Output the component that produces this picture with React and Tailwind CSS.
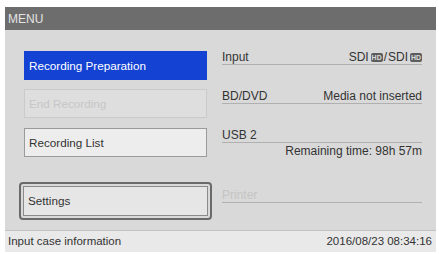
import React from 'react'

const font = { fontFamily: '"Liberation Sans", Arial, sans-serif' }

function HdBadge() {
    return (
        <span className="inline-flex items-center justify-center h-[9px] w-[12px] ml-[2px] rounded-[2px] bg-[#5c5c5c] text-[7px] leading-none font-bold text-[#dcdcdc]">
            HD
        </span>
    )
}

function InfoRow({ label, value, disabled, className }) {
    return (
        <div
            className={`flex items-end justify-between h-[18px] pb-[1px] border-b border-[#b0b0b0] text-[12px] leading-none ${
                disabled ? 'text-[#c4c4c4]' : 'text-[#333]'
            } ${className || ''}`}
        >
            <span>{label}</span>
            {value && <span className="flex items-center">{value}</span>}
        </div>
    )
}

export default function App() {
    return (
        <div className="w-[439px] h-[254px] bg-white pt-[7px] pl-[5px]" style={font}>
            <div className="w-[431px] h-[245px] flex flex-col">
                <div className="h-[23px] bg-[#6d6d6d] flex items-center pl-[3px] text-[12px] text-[#e4e4e4]">
                    MENU
                </div>
                <div className="flex-1 bg-[#d9d9d9] flex">
                    <div className="w-[217px] pl-[19px] flex flex-col">
                        <div className="mt-[21px] w-[183px] h-[29px] bg-[#1443d4] flex items-center pl-[5px] text-[11.7px] text-white">
                            Recording Preparation
                        </div>
                        <div className="mt-[9px] w-[183px] h-[29px] bg-[#dedede] border border-[#cacaca] flex items-center pl-[4px] text-[11.7px] text-[#c6c6c6]">
                            End Recording
                        </div>
                        <div className="mt-[10px] w-[183px] h-[29px] bg-[#ededed] border border-[#9a9a9a] flex items-center pl-[4px] text-[11.7px] text-[#333]">
                            Recording List
                        </div>
                        <div className="mt-[25px] -ml-[5px] w-[193px] h-[38px] rounded-[4px] border-2 border-[#6a6a6a] p-[2px]">
                            <div className="h-full bg-[#e6e6e6] border border-[#8a8a8a] flex items-center pl-[4px] text-[11.7px] text-[#333]">
                                Settings
                            </div>
                        </div>
                    </div>
                    <div className="w-[200px] flex flex-col">
                        <InfoRow
                            className="mt-[17px]"
                            label="Input"
                            value={
                                <>
                                    SDI
                                    <HdBadge />
                                    <span className="mx-[1px]">/</span>SDI
                                    <HdBadge />
                                </>
                            }
                        />
                        <InfoRow className="mt-[21px]" label="BD/DVD" value="Media not inserted" />
                        <InfoRow className="mt-[21px]" label="USB 2" />
                        <div className="text-right text-[12px] leading-none text-[#333] mt-[2px]">
                            Remaining time: 98h 57m
                        </div>
                        <InfoRow className="mt-[28px]" label="Printer" disabled />
                    </div>
                </div>
                <div className="h-[22px] bg-[#e9e9e9] border-t border-[#c2c2c2] flex items-center justify-between pl-[3px] pr-[4px] text-[11.5px] text-[#333]">
                    <span>Input case information</span>
                    <span>2016/08/23 08:34:16</span>
                </div>
            </div>
        </div>
    )
}
